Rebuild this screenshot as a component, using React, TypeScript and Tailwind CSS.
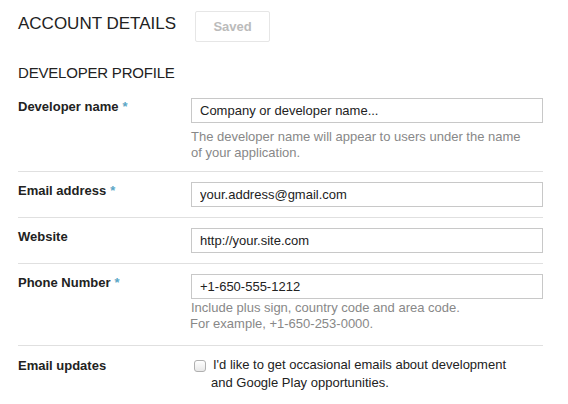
import React from "react";

const font = { fontFamily: '"Liberation Sans", Arial, Helvetica, sans-serif' };

function Label({ text, required }: { text: string; required?: boolean }) {
  return (
    <div className="w-[173px] shrink-0 pt-[1px] text-[13px] leading-[16px] font-bold text-[#222]">
      {text}
      {required && <span className="ml-[4px] text-[#5ba6c6]">*</span>}
    </div>
  );
}

function Field({ value }: { value: string }) {
  return (
    <input
      readOnly
      value={value}
      className="block w-[352px] h-[25px] border border-[#c8c8c8] bg-white pl-[8px] text-[13px] text-[#222] outline-none"
      style={font}
    />
  );
}

function Row({ children, last }: { children: React.ReactNode; last?: boolean }) {
  return (
    <div className={"flex w-[525px] pt-[10px] pb-[10px] " + (last ? "" : "border-b border-[#e0e0e0]")}>
      {children}
    </div>
  );
}

export default function App() {
  return (
    <div className="w-[568px] h-[404px] bg-white overflow-hidden pl-[18px]" style={font}>
      <div className="flex items-start pt-[11px]">
        <h1 className="mt-[3px] text-[17px] leading-[20px] font-normal text-[#222]">ACCOUNT DETAILS</h1>
        <div className="ml-[19px] w-[75px] h-[31px] flex items-center justify-center border border-[#e6e6e6] rounded-[2px] text-[13px] font-bold text-[#bbbbbb]">
          Saved
        </div>
      </div>
      <h2 className="mt-[22px] text-[15px] leading-[18px] font-normal tracking-[-0.2px] text-[#222]">DEVELOPER PROFILE</h2>
      <div className="mt-[6px]">
        <Row>
          <Label text="Developer name" required />
          <div>
            <Field value="Company or developer name..." />
            <p className="mt-[6px] text-[13px] leading-[16px] text-[#888]">
              The developer name will appear to users under the name
              <br />
              of your application.
            </p>
          </div>
        </Row>
        <Row>
          <Label text="Email address" required />
          <Field value="your.address@gmail.com" />
        </Row>
        <Row>
          <Label text="Website" />
          <Field value="http://your.site.com" />
        </Row>
        <Row>
          <Label text="Phone Number" required />
          <div>
            <Field value="+1-650-555-1212" />
            <p className="mt-[1px] mb-[3px] text-[13px] leading-[16px] text-[#888]">
              Include plus sign, country code and area code.
              <br />
              <span className="-ml-[1px]">For example, +1-650-253-0000.</span>
            </p>
          </div>
        </Row>
        <Row last>
          <div className="w-[173px] shrink-0 pt-[1px] text-[13px] leading-[18px] font-bold text-[#222]">Email updates</div>
          <div className="flex items-start">
            <span className="mt-[4px] ml-[3px] w-[12px] h-[12px] rounded-[3px] border border-[#b0b0b0] bg-gradient-to-b from-white to-[#e8e8e8] shrink-0" />
            <p className="ml-[5px] indent-[2px] text-[13px] leading-[18px] text-[#222]">
              I'd like to get occasional emails about development
              <br />
              and Google Play opportunities.
            </p>
          </div>
        </Row>
      </div>
    </div>
  );
}
